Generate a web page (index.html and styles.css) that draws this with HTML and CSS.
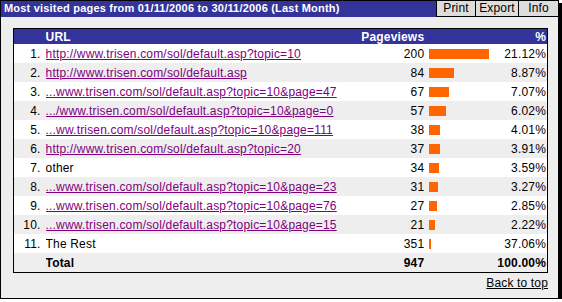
FILE: index.html
```html
<!DOCTYPE html>
<html>
<head>
<meta charset="utf-8">
<link rel="stylesheet" href="styles.css">
</head>
<body>
<div class="panel">
  <div class="titlebar">
    <div class="title">Most visited pages from 01/11/2006 to 30/11/2006 (Last Month)</div>
    <div class="btn btn-print">Print</div>
    <div class="btn btn-export">Export</div>
    <div class="btn btn-info">Info</div>
  </div>
  <div class="content">
    <table class="stats">
      <colgroup>
        <col class="c-num"><col class="c-url"><col class="c-count"><col class="c-bar"><col class="c-pct">
      </colgroup>
      <thead>
        <tr><th></th><th class="l">URL</th><th class="r">Pageviews</th><th></th><th class="r pct">%</th></tr>
      </thead>
      <tbody>
        <tr><td class="num">1.</td><td class="url"><a href="#">http://www.trisen.com/sol/default.asp?topic=10</a></td><td class="cnt">200</td><td class="bar"><span class="b" style="width:60px"></span></td><td class="pct">21.12%</td></tr>
        <tr class="alt"><td class="num">2.</td><td class="url"><a href="#">http://www.trisen.com/sol/default.asp</a></td><td class="cnt">84</td><td class="bar"><span class="b" style="width:25px"></span></td><td class="pct">8.87%</td></tr>
        <tr><td class="num">3.</td><td class="url"><a href="#">...www.trisen.com/sol/default.asp?topic=10&amp;page=47</a></td><td class="cnt">67</td><td class="bar"><span class="b" style="width:20px"></span></td><td class="pct">7.07%</td></tr>
        <tr class="alt"><td class="num">4.</td><td class="url"><a href="#">.../www.trisen.com/sol/default.asp?topic=10&amp;page=0</a></td><td class="cnt">57</td><td class="bar"><span class="b" style="width:17px"></span></td><td class="pct">6.02%</td></tr>
        <tr><td class="num">5.</td><td class="url"><a href="#">...ww.trisen.com/sol/default.asp?topic=10&amp;page=111</a></td><td class="cnt">38</td><td class="bar"><span class="b" style="width:11px"></span></td><td class="pct">4.01%</td></tr>
        <tr class="alt"><td class="num">6.</td><td class="url"><a href="#">http://www.trisen.com/sol/default.asp?topic=20</a></td><td class="cnt">37</td><td class="bar"><span class="b" style="width:11px"></span></td><td class="pct">3.91%</td></tr>
        <tr><td class="num">7.</td><td class="url">other</td><td class="cnt">34</td><td class="bar"><span class="b" style="width:10px"></span></td><td class="pct">3.59%</td></tr>
        <tr class="alt"><td class="num">8.</td><td class="url"><a href="#">...www.trisen.com/sol/default.asp?topic=10&amp;page=23</a></td><td class="cnt">31</td><td class="bar"><span class="b" style="width:9px"></span></td><td class="pct">3.27%</td></tr>
        <tr><td class="num">9.</td><td class="url"><a href="#">...www.trisen.com/sol/default.asp?topic=10&amp;page=76</a></td><td class="cnt">27</td><td class="bar"><span class="b" style="width:8px"></span></td><td class="pct">2.85%</td></tr>
        <tr class="alt"><td class="num">10.</td><td class="url"><a href="#">...www.trisen.com/sol/default.asp?topic=10&amp;page=15</a></td><td class="cnt">21</td><td class="bar"><span class="b" style="width:6px"></span></td><td class="pct">2.22%</td></tr>
        <tr><td class="num">11.</td><td class="url">The Rest</td><td class="cnt">351</td><td class="bar"><span class="b" style="width:2px"></span></td><td class="pct">37.06%</td></tr>
        <tr class="alt total"><td class="num"></td><td class="url">Total</td><td class="cnt">947</td><td class="bar"></td><td class="pct">100.00%</td></tr>
      </tbody>
    </table>
    <div class="back"><a href="#">Back to top</a></div>
  </div>
</div>
</body>
</html>
```
FILE: styles.css
```css
html, body {
  margin: 0;
  padding: 0;
  background: #ffffff;
}
body {
  font-family: "Liberation Sans", Arial, sans-serif;
  font-size: 12px;
  color: #000;
}
.panel {
  width: 557px;
  height: 297px;
  border: 1px solid #000;
  background: #eeeeee;
  box-shadow: 3px 3px 0 #000;
}
.titlebar {
  display: flex;
  height: 16px;
  background: #333399;
}
.title {
  flex: 1;
  color: #fff;
  font-weight: bold;
  font-size: 11px;
  letter-spacing: 0.2px;
  line-height: 15px;
  padding-left: 3px;
  white-space: nowrap;
}
.btn {
  box-sizing: border-box;
  height: 16px;
  background: #dddddd;
  border-left: 1px solid #000;
  border-bottom: 1px solid #000;
  text-align: center;
  line-height: 15px;
  font-size: 12px;
  letter-spacing: 0.15px;
}
.btn-print { width: 39px; }
.btn-export { width: 43px; }
.btn-info { width: 40px; }
.content {
  padding: 11px 0 0 12px;
}
.stats {
  width: 535px;
  border-collapse: collapse;
  border: 1px solid #000;
  table-layout: fixed;
  letter-spacing: 0.18px;
}
.c-num { width: 32px; }
.c-url { width: 312px; }
.c-count { width: 69px; }
.c-bar { width: 67px; }
.c-pct { width: 53px; }
.stats th {
  background: #333399;
  color: #fff;
  font-weight: bold;
  height: 15px;
  padding: 0;
  line-height: 14px;
  font-size: 12px;
}
.stats th.l { text-align: left; }
.stats th.r { text-align: right; padding-right: 3px; }
.stats th.pct { padding-right: 1px; }
.stats td {
  height: 19px;
  padding: 0;
  white-space: nowrap;
  overflow: hidden;
  vertical-align: middle;
  background: #fff;
}
.stats tr.alt td { background: #eeeeee; }
.stats td.num { text-align: right; padding-right: 5px; }
.stats td.cnt { text-align: right; padding-right: 3px; }
.stats td.bar { padding-left: 2px; }
.stats td.pct { text-align: right; padding-right: 1px; }
.stats tr.total td { font-weight: bold; }
.b {
  display: block;
  height: 10px;
  background: #ff6600;
}
a { color: #800080; text-decoration: underline; }
.back {
  width: 535px;
  text-align: right;
  margin-top: 3px;
  letter-spacing: 0.15px;
}
.back a { color: #000; }
```
